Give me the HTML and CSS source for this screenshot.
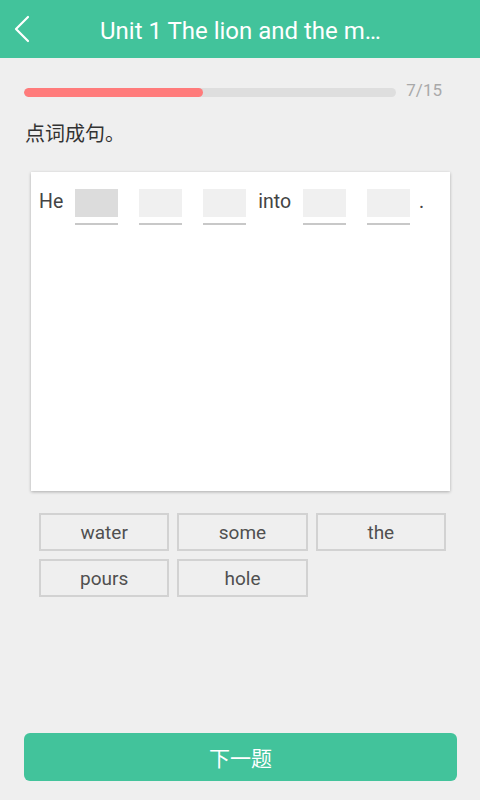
FILE: index.html
```html
<!DOCTYPE html>
<html lang="zh">
<head>
<meta charset="utf-8">
<link rel="stylesheet" href="styles.css">
</head>
<body>
<div class="page">
  <header class="topbar">
    <span class="back">
      <svg width="20" height="30" viewBox="0 0 20 30"><polyline points="15,2 3,14 15,26" fill="none" stroke="#fff" stroke-width="2.2" stroke-linecap="round" stroke-linejoin="round"/></svg>
    </span>
    <h1 class="title">Unit 1 The lion and the m…</h1>
  </header>

  <div class="progress-row">
    <div class="bar"><div class="bar-fill" style="width:48%"></div></div>
    <span class="count">7/15</span>
  </div>

  <p class="question">点词成句。</p>

  <div class="card">
    <div class="sentence">
      <span class="word">He</span>
      <span class="blank active"></span>
      <span class="blank"></span>
      <span class="blank"></span>
      <span class="word">into</span>
      <span class="blank"></span>
      <span class="blank"></span>
      <span class="word dot">.</span>
    </div>
  </div>

  <div class="choices">
    <button class="choice">water</button>
    <button class="choice">some</button>
    <button class="choice">the</button>
    <button class="choice">pours</button>
    <button class="choice">hole</button>
  </div>

  <button class="next">下一题</button>
</div>
</body>
</html>
```

FILE: styles.css
```css
* { box-sizing: border-box; }
html, body { margin: 0; padding: 0; }
body {
  background: #efefef;
  font-family: Roboto, "Noto Sans CJK SC", sans-serif;
}
.page {
  width: 480px;
  height: 800px;
  display: flex;
  flex-direction: column;
}
.topbar {
  height: 58px;
  background: #42c39b;
  display: flex;
  align-items: center;
  flex-shrink: 0;
}
.back {
  display: flex;
  width: 100px;
  padding-left: 13px;
  padding-top: 1px;
}
.title {
  margin: 0;
  color: #fff;
  font-weight: 400;
  font-size: 24px;
  white-space: nowrap;
  padding-top: 3px;
}
.progress-row {
  display: flex;
  align-items: center;
  gap: 10px;
  padding: 0 38px 0 24px;
  margin-top: 21px;
  height: 22px;
}
.bar {
  flex: 1;
  height: 9px;
  border-radius: 5px;
  background: #dedede;
  overflow: hidden;
  margin-top: 4px;
}
.bar-fill {
  height: 100%;
  background: #ff7b7b;
  border-radius: 5px;
}
.count {
  color: #a9a9a9;
  font-size: 17px;
}
.question {
  margin: 21px 0 0 25px;
  font-size: 20px;
  color: #333;
  line-height: 24px;
}
.card {
  margin: 26px 30px 0 31px;
  height: 319px;
  background: #fff;
  box-shadow: 0 1px 3px rgba(0,0,0,0.28);
  padding: 17px 8px 0 8px;
}
.sentence {
  display: flex;
  align-items: flex-start;
}
.word {
  font-size: 19.5px;
  color: #444;
  margin: 0 1px;
  line-height: 24px;
  padding-top: 1px;
}
.word:first-child { margin-left: 0; }
.dot { margin-left: -2px; }
.blank {
  width: 43px;
  height: 36px;
  margin: 0 11px;
  background: #f0f0f0;
  border-bottom: 2px solid #c8c8c8;
  box-shadow: inset 0 -6px 0 #fff;
}
.blank + .blank { margin-left: 10px; }
.blank.active { background: #dcdcdc; }
.choices {
  display: grid;
  grid-template-columns: repeat(3, 1fr);
  gap: 8px 8px;
  padding: 0 34px 0 39px;
  margin-top: 22px;
}
.choice {
  height: 38px;
  background: #efefef;
  border: 2px solid #d2d2d2;
  font-family: Roboto, sans-serif;
  font-size: 19px;
  color: #505050;
  padding: 0;
}
.next {
  margin: auto 23px 19px 24px;
  height: 48px;
  border: none;
  border-radius: 6px;
  background: #42c39b;
  color: #fff;
  font-size: 21px;
  font-family: "Noto Sans CJK SC", sans-serif;
}
```
